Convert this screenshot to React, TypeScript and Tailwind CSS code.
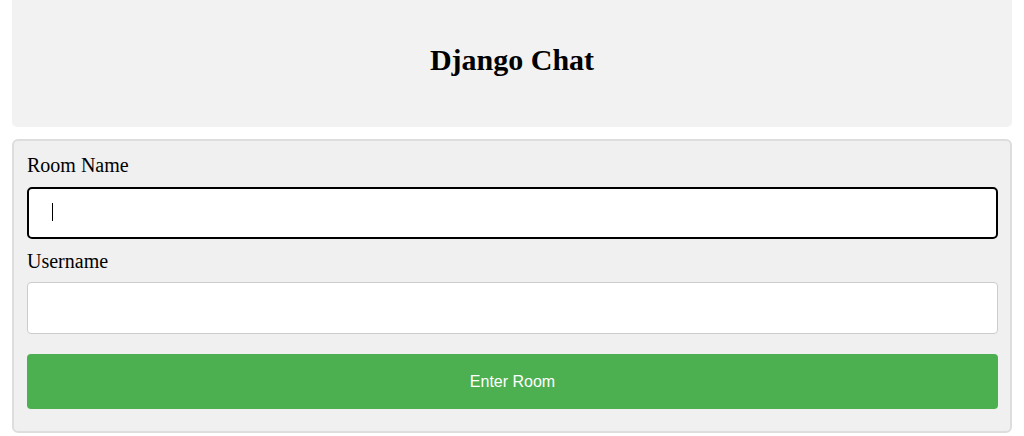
import React from "react";

export default function App() {
  return (
    <div
      className="w-[1024px] h-[436px] bg-white px-[12px] overflow-hidden"
      style={{ fontFamily: '"Liberation Serif", "Times New Roman", serif' }}
    >
      <div className="h-[127px] bg-[#f2f2f2] rounded-b-[5px] flex items-center justify-center">
        <h1 className="text-[30px] font-bold text-black leading-none pb-[8px]">Django Chat</h1>
      </div>
      <div className="mt-[12px] border-2 border-[#dddddd] rounded-[6px] bg-[#f0f0f0] pl-[13px] pr-[12px] pt-[13px] pb-[22px] flex flex-col">
        <label className="text-[20px] leading-[23px] text-black">Room Name</label>
        <div className="relative mt-[10px]">
          <input
            type="text"
            className="block h-[52px] w-full rounded-[5px] border-2 border-black bg-white pl-[24px] text-[16px] outline-none"
          />
          <span className="absolute left-[25px] top-[16px] h-[18px] w-px bg-black" />
        </div>
        <label className="mt-[11px] text-[20px] leading-[23px] text-black">Username</label>
        <input
          type="text"
          className="mt-[9px] h-[52px] w-full rounded-[4px] border border-[#cccccc] bg-white px-[10px] text-[16px] outline-none"
        />
        <button
          className="mt-[20px] h-[55px] w-full rounded-[4px] bg-[#4caf50] text-white text-[16px]"
          style={{ fontFamily: '"Liberation Sans", Arial, sans-serif' }}
        >
          Enter Room
        </button>
      </div>
    </div>
  );
}
